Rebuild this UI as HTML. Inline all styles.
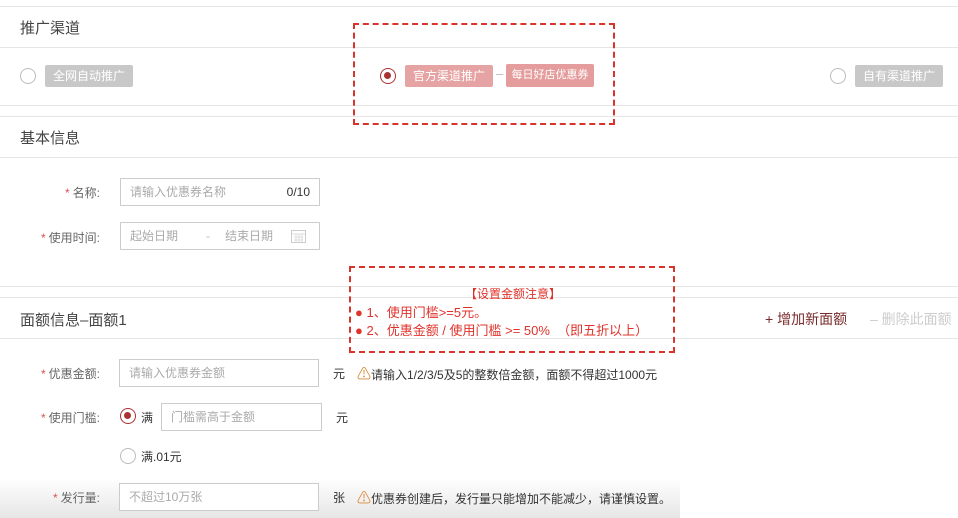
<!DOCTYPE html>
<html><head><meta charset="utf-8">
<style>
*{margin:0;padding:0;box-sizing:border-box}
body{width:958px;height:518px;background:#fff;position:relative;overflow:hidden;font-family:"Liberation Sans","Noto Sans CJK SC",sans-serif;color:#333;font-size:13px}
.a{position:absolute;white-space:nowrap}
.hl{position:absolute;left:0;width:958px;height:1px;background:#e6e6e6}
.radio{position:absolute;width:16px;height:16px;border:1px solid #bbb;border-radius:50%;background:#fff}
.radio.on{border:1.5px solid #a83232}
.radio.on:after{content:"";position:absolute;left:3px;top:3px;width:7px;height:7px;border-radius:50%;background:#a83232}
.tag{position:absolute;height:22px;line-height:22px;color:#fff;font-size:12px;border-radius:2px;text-align:center;white-space:nowrap;overflow:hidden}
.inp{position:absolute;border:1px solid #ccc;height:28px;line-height:26px;padding-left:9px;color:#aaa;font-size:12px;background:#fff}
.lab{position:absolute;font-size:12px;color:#666;text-align:right;width:100px;white-space:nowrap}
.lab b{color:#d9534f;font-weight:normal;margin-right:3px}
.dash{position:absolute;border:2px dashed #d9342b}
.red{color:#e0322a}
</style></head><body>
<div class="hl" style="top:6px"></div>
<div class="a" style="left:20px;top:17px;font-size:15px;color:#444">推广渠道</div>
<div class="hl" style="top:47px"></div>
<div class="radio" style="left:20px;top:68px"></div>
<div class="tag" style="left:45px;top:65px;width:88px;background:#c8c8c8">全网自动推广</div>
<div class="radio on" style="left:380px;top:68px"></div>
<div class="tag" style="left:405px;top:65px;width:88px;background:#e6a3a3">官方渠道推广</div>
<div class="a" style="left:496px;top:66px;color:#bbb">–</div>
<div class="tag" style="left:506px;top:64px;width:88px;height:23px;line-height:23px;font-size:11px;background:#e59c9c">每日好店优惠券</div>
<div class="radio" style="left:830px;top:68px"></div>
<div class="tag" style="left:855px;top:65px;width:88px;background:#c8c8c8">自有渠道推广</div>
<div class="hl" style="top:105px"></div>
<div class="dash" style="left:353px;top:23px;width:262px;height:102px"></div>

<div class="hl" style="top:116px"></div>
<div class="a" style="left:20px;top:127px;font-size:15px;color:#444">基本信息</div>
<div class="hl" style="top:157px"></div>
<div class="lab" style="left:0;top:184px"><b>*</b>名称:</div>
<div class="inp" style="left:120px;top:178px;width:200px">请输入优惠券名称<span style="position:absolute;right:9px;color:#333">0/10</span></div>
<div class="lab" style="left:0;top:229px"><b>*</b>使用时间:</div>
<div class="inp" style="left:120px;top:222px;width:200px">起始日期<span style="position:absolute;left:85px;color:#bbb">-</span><span style="position:absolute;left:104px">结束日期</span>
<svg style="position:absolute;left:170px;top:7px" width="15" height="13" viewBox="0 0 15 13"><rect x=".5" y=".5" width="14" height="12" fill="none" stroke="#ccc"/><path d="M1 4h13M3 7h9M3 10h9M5 4v8M8 4v8M11 4v8" stroke="#ddd"/></svg></div>

<div class="hl" style="top:286px"></div>
<div class="hl" style="top:297px"></div>
<div class="a" style="left:20px;top:309px;font-size:15px;color:#444">面额信息–面额1</div>
<div class="a" style="left:765px;top:309px;font-size:14px;color:#7a2b2b">+ 增加新面额</div>
<div class="a" style="left:870px;top:309px;font-size:14px;color:#ccc">– 删除此面额</div>
<div class="hl" style="top:338px"></div>
<div class="dash" style="left:349px;top:266px;width:326px;height:87px"></div>
<div class="a red" style="left:465px;top:285px;font-size:12px">【设置金额注意】</div>
<div class="a red" style="left:355px;top:302px;font-size:13px">● 1、使用门槛>=5元。</div>
<div class="a red" style="left:355px;top:320px;font-size:13px">● 2、优惠金额 / 使用门槛 >= 50% &nbsp;（即五折以上）</div>

<div class="lab" style="left:0;top:365px"><b>*</b>优惠金额:</div>
<div class="inp" style="left:119px;top:359px;width:200px">请输入优惠券金额</div>
<div class="a" style="left:333px;top:365px;font-size:12px">元</div>
<div class="a" style="left:357px;top:364px;font-size:12px"><span style="color:#d98a3a;font-size:14px">⚠</span>请输入1/2/3/5及5的整数倍金额，面额不得超过1000元</div>

<div class="lab" style="left:0;top:409px"><b>*</b>使用门槛:</div>
<div class="radio on" style="left:120px;top:408px"></div>
<div class="a" style="left:141px;top:409px;font-size:12px">满</div>
<div class="inp" style="left:161px;top:403px;width:161px">门槛需高于金额</div>
<div class="a" style="left:336px;top:409px;font-size:12px">元</div>
<div class="radio" style="left:120px;top:448px"></div>
<div class="a" style="left:141px;top:448px;font-size:12px">满.01元</div>

<div style="position:absolute;left:0;top:478px;width:680px;height:40px;background:linear-gradient(#fff,#f0f0f0 60%,#e6e6e6)"></div>
<div class="lab" style="left:0;top:489px"><b>*</b>发行量:</div>
<div class="inp" style="left:119px;top:483px;width:200px">不超过10万张</div>
<div class="a" style="left:333px;top:489px;font-size:12px">张</div>
<div class="a" style="left:357px;top:488px;font-size:12px"><span style="color:#d98a3a;font-size:14px">⚠</span>优惠券创建后，发行量只能增加不能减少，请谨慎设置。</div>
</body></html>
